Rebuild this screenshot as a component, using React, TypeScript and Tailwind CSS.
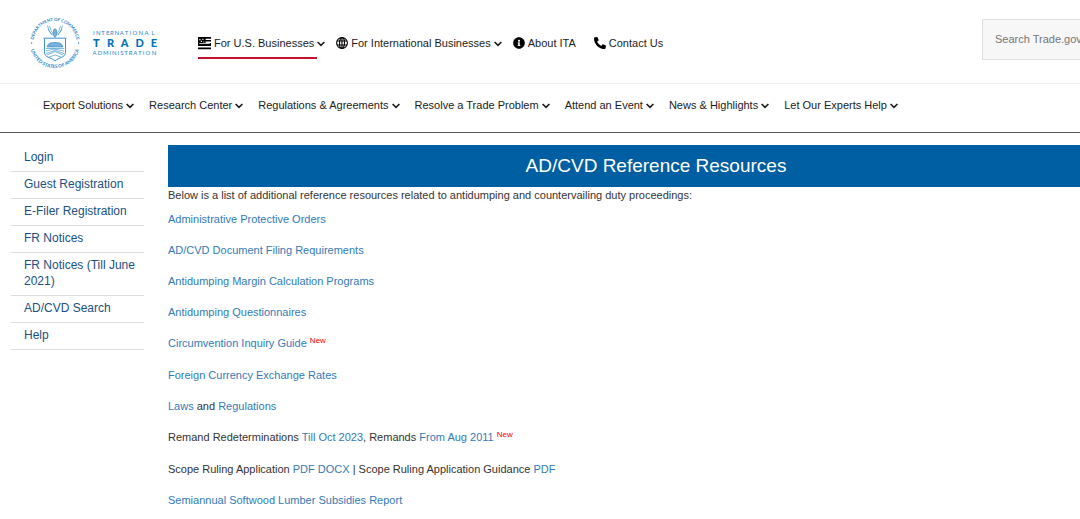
import type { ReactNode } from "react";
import { FaInfoCircle, FaPhoneAlt } from "react-icons/fa";

function Chevron() {
  return (
    <svg viewBox="0 0 8 8" className="mt-0.5 h-2 w-2 shrink-0" fill="none" stroke="currentColor" strokeWidth="1.6" aria-hidden="true">
      <path d="M0.6 2 L4 5.4 L7.4 2" />
    </svg>
  );
}

function FlagIcon() {
  return (
    <svg viewBox="0 0 13 13" className="h-[13px] w-[13px] shrink-0" aria-hidden="true">
      <path fill="#000" d="M0 0h13v1.700H7.600v1.300H13v1.500H7.600v1.500H13v3H0zM0 10.500h13v1.800H0z" />
      <path fill="#fff" d="M1.300 2h1.200v1.200H1.300zM4.300 1.800h1.200v1.200H4.300zM2.800 3.800h1.200V5H2.800zM5.300 4.400h1v1h-1zM1.300 6.300h10.500v.8H1.300z" />
    </svg>
  );
}

function GlobeIcon() {
  return (
    <svg viewBox="0 0 12 12" className="h-3 w-3 shrink-0" fill="none" stroke="#000" strokeWidth="1.1" aria-hidden="true">
      <circle cx="6" cy="6" r="5.4" />
      <ellipse cx="6" cy="6" rx="2.500" ry="5.400" />
      <path d="M1 4h10M1 8h10M6 .6v10.800" />
    </svg>
  );
}

function Logo() {
  return (
    <svg viewBox="0 0 130 54" className="h-[54px] w-[130px] shrink-0" role="img" aria-label="International Trade Administration" fontFamily="Lato, sans-serif" fill="#2a86c8">
      <defs>
        <path id="seal-top" d="M4.500 26.500 A21.500 21.500 0 0 1 47.500 26.500" />
        <path id="seal-bottom" d="M1 27 A25 25 0 0 0 51 27" />
      </defs>
      <text fontSize="4.300" fontWeight="700" textAnchor="middle">
        <textPath href="#seal-top" startOffset="50%">DEPARTMENT OF COMMERCE</textPath>
      </text>
      <text fontSize="4.700" fontWeight="700" textAnchor="middle">
        <textPath href="#seal-bottom" startOffset="50%">UNITED STATES OF AMERICA</textPath>
      </text>
      <circle cx="2.600" cy="27" r=".7" />
      <circle cx="49.600" cy="27" r=".7" />
      <g fill="none" stroke="#2a86c8" strokeWidth=".6">
        <path d="M18.500 9.500q.5 6 5 9.500M20.500 10q1 5 4 8M33.500 9.500q-.5 6-5 9.500M31.500 10q-1 5-4 8M19 13l4 6M33 13l-4 6" />
        <path d="M24.500 14l1.500-1.500 1.500 1.500v5.500l-1.500 2-1.500-2z" fill="#75b1dc" />
        <path d="M14.500 22.200h23M15.500 22.500v13.500c0 6 6.500 5 10.500 9 4-4 10.500-3 10.500-9V22.500" strokeWidth=".9" />
        <path d="M18 31c1-4 4-4.500 8-4.500s7 .5 8 4.500z" fill="#75b1dc" />
        <path d="M17 32.500h18M17 35l8-2 10 2M17 37.500l9-3 9 3M18 39l8-3.500 8 3.500M20 41l6-2 6 2" strokeWidth=".6" />
      </g>
      <text fontSize="6" y="19" x="64 67 72.300 76.900 81 85.600 90.800 95.800 100.500 103.500 109.500 115.400 122.400">INTERNATIONAL</text>
      <text fontSize="11" fontWeight="900" y="31" x="64 78 91.700 106.500 121.700" fill="#0071bc">TRADE</text>
      <text fontSize="6" y="39.300" x="63.500 68.700 74 80.500 83 88.600 91.200 95.200 99.700 104.300 109 113.800 116.500 122.800">ADMINISTRATION</text>
    </svg>
  );
}

function TopLink({ icon, children, menu, active }: { icon: ReactNode; children: ReactNode; menu?: boolean; active?: boolean }) {
  return (
    <a href="#" className="relative flex items-center gap-[3px] whitespace-nowrap py-2">
      {icon}
      <span>{children}</span>
      {menu && <Chevron />}
      {active && <span className="absolute bottom-0 left-0 right-2 h-0.5 bg-[#c4122e]" />}
    </a>
  );
}

const sections = ["Export Solutions", "Research Center", "Regulations & Agreements", "Resolve a Trade Problem", "Attend an Event", "News & Highlights", "Let Our Experts Help"];
const sideLinks = ["Login", "Guest Registration", "E-Filer Registration", "FR Notices", "FR Notices (Till June 2021)", "AD/CVD Search", "Help"];

function Ref({ children }: { children: ReactNode }) {
  return <a href="#" className="text-[#337ab7]">{children}</a>;
}

function NewItem({ children }: { children: ReactNode }) {
  return (
    <div className="leading-[17px]">
      {children} <sup className="text-[8px] text-[#ff0000]">New</sup>
    </div>
  );
}

const resources: ReactNode[] = [
  <Ref>Administrative Protective Orders</Ref>,
  <Ref>AD/CVD Document Filing Requirements</Ref>,
  <Ref>Antidumping Margin Calculation Programs</Ref>,
  <Ref>Antidumping Questionnaires</Ref>,
  <NewItem><Ref>Circumvention Inquiry Guide</Ref></NewItem>,
  <Ref>Foreign Currency Exchange Rates</Ref>,
  <><Ref>Laws</Ref> and <Ref>Regulations</Ref></>,
  <NewItem>Remand Redeterminations <Ref>Till Oct 2023</Ref>, Remands <Ref>From Aug 2011</Ref></NewItem>,
  <>Scope Ruling Application <Ref>PDF</Ref> <Ref>DOCX</Ref> | Scope Ruling Application Guidance <Ref>PDF</Ref></>,
  <Ref>Semiannual Softwood Lumber Subsidies Report</Ref>,
];

export default function App() {
  return (
    <div className="overflow-x-hidden bg-white font-['Liberation_Sans',Arial,sans-serif] text-[11px] leading-4 text-[#333]">
      <header className="text-[#1b1b1b]">
        <div className="flex items-center border-b border-[#f0f0f0] pb-[5px] pl-[29px] pt-2">
          <a href="#" className="mr-[39px] py-2"><Logo /></a>
          <nav aria-label="Audience" className="flex items-center">
            <div className="flex items-center gap-[11px]">
              <TopLink icon={<FlagIcon />} menu active>For U.S. Businesses</TopLink>
              <TopLink icon={<GlobeIcon />} menu>For International Businesses</TopLink>
              <TopLink icon={<FaInfoCircle className="h-3 w-3 text-black" />}>About ITA</TopLink>
            </div>
            <div className="ml-[18px]">
              <TopLink icon={<FaPhoneAlt className="h-3 w-3 text-black" />}>Contact Us</TopLink>
            </div>
          </nav>
          <input type="search" aria-label="Search Trade.gov" placeholder="Search Trade.gov" className="-mr-32 mb-2 ml-auto h-[41px] w-[226px] shrink-0 border border-[#dcdee0] bg-[#f7f7f7] px-3 placeholder:text-[#757575]" />
        </div>
        <nav aria-label="Sections" className="flex gap-[15px] border-b border-[#555] pb-[19px] pl-[43px] pt-[13px]">
          {sections.map((s) => (
            <a key={s} href="#" className="flex items-center gap-[3px] whitespace-nowrap">{s}<Chevron /></a>
          ))}
        </nav>
      </header>
      <div className="flex pl-[11px] pt-3">
        <aside className="mr-6 w-[133px] shrink-0">
          <ul>
            {sideLinks.map((s) => (
              <li key={s} className="border-b border-[#ddd]">
                <a href="#" className="block pb-1.5 pl-[13px] pr-2 pt-1 text-[12px] leading-4 text-[#205081]">{s}</a>
              </li>
            ))}
          </ul>
        </aside>
        <main className="min-w-0 flex-1">
          <h1 className="bg-[#005ea2] py-2 pl-16 text-center text-[19px] leading-[26px] text-white">AD/CVD Reference Resources</h1>
          <p>Below is a list of additional reference resources related to antidumping and countervailing duty proceedings:</p>
          <ul className="mt-2 flex flex-col gap-[15px]">
            {resources.map((r, i) => <li key={i}>{r}</li>)}
          </ul>
        </main>
      </div>
    </div>
  );
}
